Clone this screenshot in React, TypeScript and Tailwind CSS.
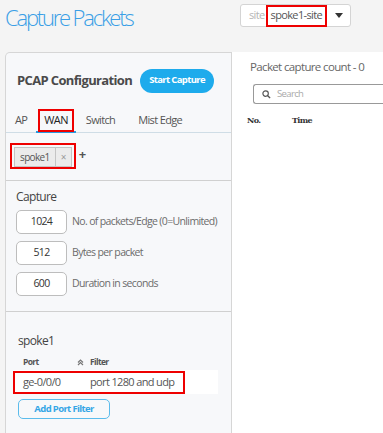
import React from 'react';

const font = { fontFamily: '"Open Sans", "Noto Sans", sans-serif', letterSpacing: '-0.04em' };

function CaptureField({ value, label }: { value: string; label: string }) {
  return (
    <div className="flex items-center h-[23px] whitespace-nowrap">
      <div className="w-[51px] h-[24px] rounded-[5px] border border-[#bdbdbd] bg-white flex items-center justify-center text-[10.5px] text-[#333]">
        {value}
      </div>
      <span className="ml-[5px] text-[10.5px] text-[#6b6b6b]">{label}</span>
    </div>
  );
}

export default function App() {
  return (
    <div className="w-[383px] h-[433px] overflow-hidden bg-[#f4f4f4] whitespace-nowrap" style={font}>
      {/* Header */}
      <div className="flex items-start h-[52px]">
        <h1 className="ml-[5px] mt-[1px] w-[235px] text-[22px] tracking-[-2.2px] leading-[32px] font-light text-[#3a9fe6]">Capture Packets</h1>
        <div className="mt-[4px] h-[23px] w-[111px] flex items-center rounded-[3px] border border-[#d4d4d4] bg-white">
          <span className="ml-[8px] text-[11px] text-[#b5b5b5]">site</span>
          <span className="ml-[1px] h-[22px] px-[3px] flex items-center border-2 border-[#ee0000] text-[11px] text-[#555]">
            spoke1-site
          </span>
          <svg width="8" height="5" viewBox="0 0 8 5" className="ml-[8px]">
            <path d="M0 0 L8 0 L4 5 Z" fill="#333" />
          </svg>
        </div>
      </div>

      {/* Body */}
      <div className="flex h-[381px]">
        {/* Left panel */}
        <div className="ml-[5px] w-[227px] shrink-0 bg-[#f7f8fa] border-l border-t border-r border-[#d6d6d6] rounded-tl-[5px]">
          <div className="flex items-center pl-[11px] h-[55px]">
            <span className="text-[13px] font-bold text-[#4a4a4a]">PCAP Configuration</span>
            <button className="ml-[8px] h-[24px] px-[9px] rounded-full bg-[#1eabec] text-white text-[9.5px] font-bold">
              Start Capture
            </button>
          </div>

          {/* Tabs */}
          <div className="flex items-end h-[25px] border-b border-[#cfdde6] text-[11px] text-[#555]">
            <span className="ml-[9px] pb-[4px]">AP</span>
            <div className="ml-[9px] px-[2px] border-b-2 border-[#2a9ae0] -mb-[1px]">
              <span className="flex items-center h-[23px] px-[4px] border-2 border-[#ee0000] text-[#222] mb-[-1px]">WAN</span>
            </div>
            <span className="ml-[10px] pb-[4px]">Switch</span>
            <span className="ml-[23px] pb-[4px]">Mist Edge</span>
          </div>

          {/* Device tag */}
          <div className="h-[48px] border-b border-[#d0d0d0] flex items-start pt-[10px] pl-[4px]">
            <div className="border-2 border-[#ee0000] p-[2px] h-[26px] flex">
              <div className="flex items-center h-[20px] border border-[#c4c4c4] bg-[#ebebeb] text-[10px] text-[#555]">
                <span className="px-[5px]">spoke1</span>
                <span className="h-full border-l border-[#c4c4c4] px-[5px] flex items-center text-[10px] text-[#999]">×</span>
              </div>
            </div>
            <span className="ml-[3px] mt-[4px] text-[13px] font-bold text-[#555] leading-[14px]">+</span>
          </div>

          {/* Capture settings */}
          <div className="h-[131px] border-b border-[#d0d0d0] pl-[10px] pt-[7px]">
            <div className="text-[12px] text-[#444] leading-[18px]">Capture</div>
            <div className="mt-[4px] flex flex-col gap-[8px]">
              <CaptureField value="1024" label="No. of packets/Edge (0=Unlimited)" />
              <CaptureField value="512" label="Bytes per packet" />
              <CaptureField value="600" label="Duration in seconds" />
            </div>
          </div>

          {/* Port filters */}
          <div className="pt-[20px]">
            <div className="pl-[12px] text-[12px] text-[#444] leading-[18px]">spoke1</div>
            <div className="mt-[5px] flex items-center h-[14px] pl-[17px] text-[8.5px] font-bold text-[#555]">
              <span className="w-[54px]">Port</span>
              <svg width="7" height="7" viewBox="0 0 7 7" className="mr-[6px]">
                <path d="M1 3.5 L3.5 1 L6 3.5 M1 6 L3.5 3.5 L6 6" stroke="#777" strokeWidth="1.2" fill="none" />
              </svg>
              <span>Filter</span>
            </div>
            <div className="mt-[1px] ml-[7px] w-[205px] h-[24px] bg-white flex items-center">
              <div className="h-[23px] w-[172px] border-2 border-[#ee0000] flex items-center text-[11px] text-[#555]">
                <span className="pl-[8px] w-[75px]">ge-0/0/0</span>
                <span>port 1280 and udp</span>
              </div>
            </div>
            <button className="mt-[4px] ml-[12px] w-[92px] h-[20px] rounded-[5px] border border-[#5bbcec] text-[9.5px] font-bold text-[#35a6e6]">
              Add Port Filter
            </button>
          </div>
        </div>

        {/* Right panel */}
        <div className="flex-1 bg-white pl-[18px] pt-[7px]">
          <div className="text-[11.5px] text-[#666] leading-[16px]">Packet capture count - 0</div>
          <div className="mt-[9px] ml-[3px] h-[20px] rounded-l-[3px] border border-[#999] border-r-0 flex items-center">
            <svg width="9" height="9" viewBox="0 0 10 10" className="ml-[8px]">
              <circle cx="4" cy="4" r="3" stroke="#555" strokeWidth="1.3" fill="none" />
              <path d="M6.3 6.3 L9 9" stroke="#555" strokeWidth="1.5" />
            </svg>
            <span className="ml-[6px] text-[9.5px] text-[#aaa]">Search</span>
          </div>
          <div className="mt-[10px] flex text-[8px] font-bold text-[#333]" style={{ fontFamily: '"DejaVu Serif", serif' }}>
            <span className="-ml-[3px] w-[45px]">No.</span>
            <span>Time</span>
          </div>
        </div>
      </div>
    </div>
  );
}
